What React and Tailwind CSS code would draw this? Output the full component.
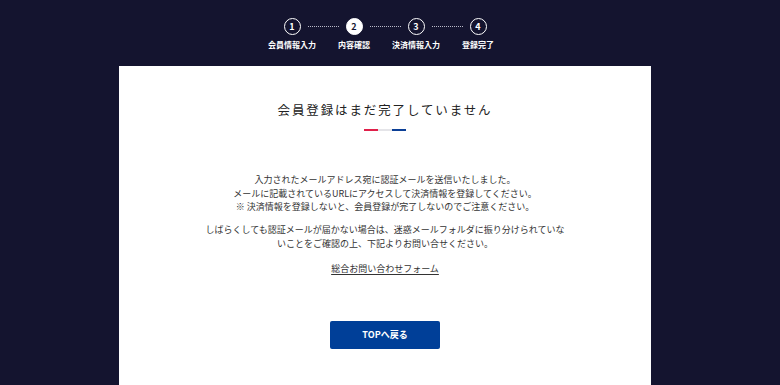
import React from "react";

const steps = [
  { no: 1, label: "会員情報入力" },
  { no: 2, label: "内容確認", active: true },
  { no: 3, label: "決済情報入力" },
  { no: 4, label: "登録完了" },
];

function Stepper() {
  return (
    <div className="flex justify-center pt-[18px]">
      {steps.map((step, i) => (
        <React.Fragment key={step.no}>
          {i > 0 && (
            <div className="mx-[7px] mt-[8px] h-0 w-[31px] border-t border-dotted border-[#b9b9c8]" />
          )}
          <div className="flex w-[17px] flex-col items-center">
            <div
              className={`flex h-[17px] w-[17px] items-center justify-center rounded-full border-[1.5px] border-white text-[9px] font-bold leading-none ${
                step.active ? "bg-white text-[#14142f]" : "text-white"
              }`}
            >
              {step.no}
            </div>
            <span className="mt-[6px] whitespace-nowrap text-[8px] font-bold leading-none text-white">
              {step.label}
            </span>
          </div>
        </React.Fragment>
      ))}
    </div>
  );
}

export default function App() {
  return (
    <div
      className="h-[385px] w-[780px] overflow-hidden bg-[#14142f]"
      style={{ fontFamily: '"Noto Sans CJK JP", "Noto Sans", sans-serif' }}
    >
      <div className="w-[770px]">
        <Stepper />
        <div className="mx-auto mt-[17px] h-[400px] w-[532px] bg-white pt-[37px] text-center">
          <h1 className="text-[12.5px] font-normal leading-[13px] tracking-[0.15em] text-[#222]">
            会員登録はまだ完了していません
          </h1>
          <div className="mt-[13px] flex justify-center">
            <span className="h-[2px] w-[14px] bg-[#e0204a]" />
            <span className="h-[2px] w-[14px] bg-[#e4e4e8]" />
            <span className="h-[2px] w-[14px] bg-[#0b3f96]" />
          </div>
          <div className="mt-[42px] text-[9px] leading-[13.5px] text-[#333]">
            <p>
              入力されたメールアドレス宛に認証メールを送信いたしました。
              <br />
              メールに記載されているURLにアクセスして決済情報を登録してください。
              <br />※ 決済情報を登録しないと、会員登録が完了しないのでご注意ください。
            </p>
            <p className="mt-[9.5px]">
              しばらくしても認証メールが届かない場合は、迷惑メールフォルダに振り分けられていな
              <br />
              いことをご確認の上、下記よりお問い合せください。
            </p>
            <p className="mt-[11.5px]">
              <a href="#" className="underline underline-offset-2">
                総合お問い合わせフォーム
              </a>
            </p>
          </div>
          <button className="mt-[46px] h-[28px] w-[110px] rounded-[2px] bg-[#003f98] text-[9px] font-bold text-white">
            TOPへ戻る
          </button>
        </div>
      </div>
    </div>
  );
}
